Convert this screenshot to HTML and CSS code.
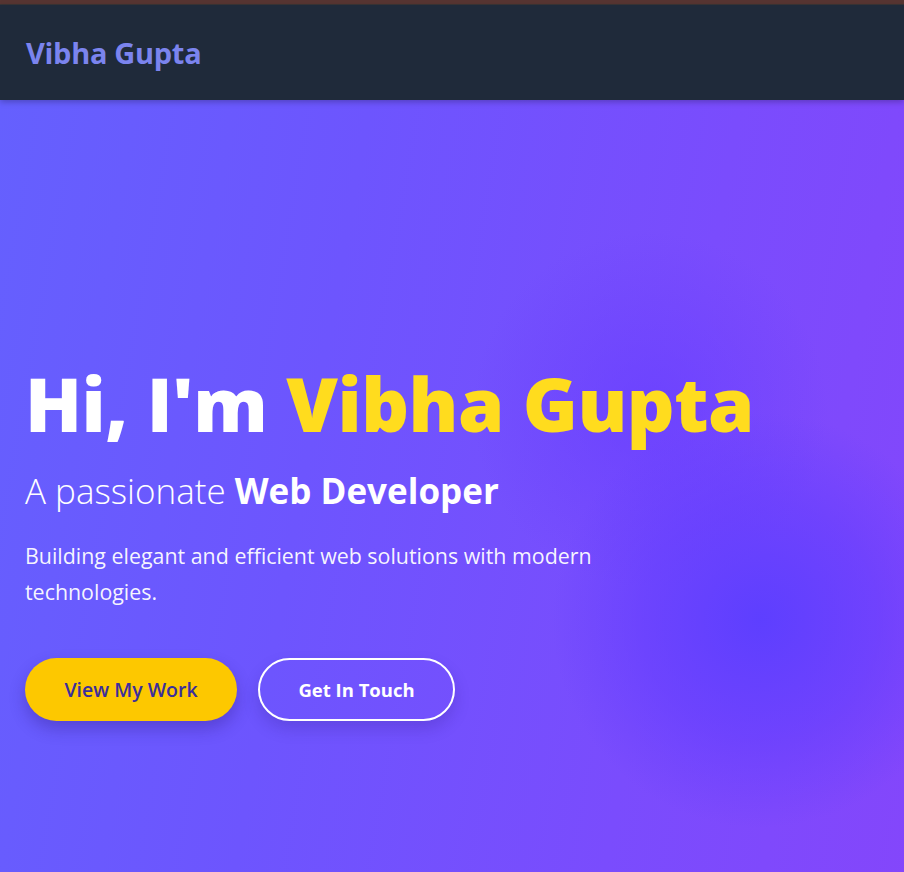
FILE: index.html
```html
<!DOCTYPE html>
<html lang="en">
<head>
<meta charset="utf-8">
<title>Vibha Gupta</title>
<link rel="stylesheet" href="styles.css">
</head>
<body>
<div class="topstrip"></div>
<header class="navbar">
  <a class="logo" href="#">Vibha Gupta</a>
</header>
<section class="hero">
  <div class="glow glow-a"></div>
  <div class="glow glow-b"></div>
  <div class="hero-content">
    <h1 class="hero-title">Hi, I'm <span class="accent">Vibha Gupta</span></h1>
    <h2 class="hero-sub">A passionate <strong>Web Developer</strong></h2>
    <p class="hero-text">Building elegant and efficient web solutions with modern technologies.</p>
    <div class="hero-actions">
      <a class="btn btn-primary" href="#">View My Work</a>
      <a class="btn btn-outline" href="#">Get In Touch</a>
    </div>
  </div>
</section>
</body>
</html>
```

FILE: styles.css
```css
* { box-sizing: border-box; }
html, body { margin: 0; padding: 0; }
body {
  font-family: "Open Sans", "Noto Sans", sans-serif;
  background: #1f2a3a;
  overflow: hidden;
}
.topstrip {
  height: 5px;
  background: #573532;
  border-bottom: 1px solid #3a3536;
}
.navbar {
  height: 95px;
  background: #1f2a3a;
  display: flex;
  align-items: center;
  padding: 0 26px;
  box-shadow: 0 2px 6px rgba(0,0,0,0.25);
  position: relative;
  z-index: 2;
}
.logo {
  font-size: 29px;
  font-weight: 700;
  color: #7b84ee;
  text-decoration: none;
  letter-spacing: -0.3px;
}
.hero {
  position: relative;
  min-height: 100vh;
  display: flex;
  align-items: center;
  padding: 0 25px;
  overflow: hidden;
  background: linear-gradient(100deg, #6560fe 0%, #6d55fe 35%, #7a4cfd 70%, #8446fb 100%);
}
.glow {
  position: absolute;
  border-radius: 50%;
  pointer-events: none;
}
.glow-a {
  left: 470px; top: 130px; width: 360px; height: 360px;
  background: radial-gradient(circle, rgba(100,60,255,0.6) 0%, rgba(100,60,255,0) 70%);
}
.glow-b {
  left: 550px; top: 310px; width: 420px; height: 420px;
  background: radial-gradient(circle, rgba(92,62,255,0.95) 0%, rgba(95,60,255,0.5) 40%, rgba(95,60,255,0) 70%);
}
.hero-content {
  position: relative;
  z-index: 1;
  margin-top: 8px;
}
.hero-title {
  margin: 0;
  font-size: 74.5px;
  font-weight: 800;
  line-height: 1.2;
  color: #ffffff;
  letter-spacing: -0.5px;
}
.accent { color: #ffdc1e; }
.hero-sub {
  margin: 20px 0 0;
  font-size: 35px;
  font-weight: 300;
  color: #ffffff;
  line-height: 1.3;
}
.hero-sub strong { font-weight: 700; }
.hero-text {
  margin: 24px 0 0;
  max-width: 620px;
  font-size: 21.4px;
  line-height: 36px;
  color: rgba(255,255,255,0.95);
}
.hero-actions {
  display: flex;
  gap: 21px;
  margin-top: 48px;
}
.btn {
  display: inline-flex;
  align-items: center;
  justify-content: center;
  height: 63px;
  border-radius: 32px;
  font-size: 18px;
  font-weight: 600;
  text-decoration: none;
}
.btn-primary {
  width: 212px;
  font-size: 19.5px;
  background: #fdc800;
  color: #3b2e9c;
  box-shadow: 0 8px 16px rgba(40,20,120,0.3);
}
.btn-outline {
  width: 197px;
  font-size: 18.5px;
  border: 2px solid #ffffff;
  color: #ffffff;
  font-weight: 700;
  box-shadow: 0 8px 16px rgba(40,20,120,0.2);
}
```
